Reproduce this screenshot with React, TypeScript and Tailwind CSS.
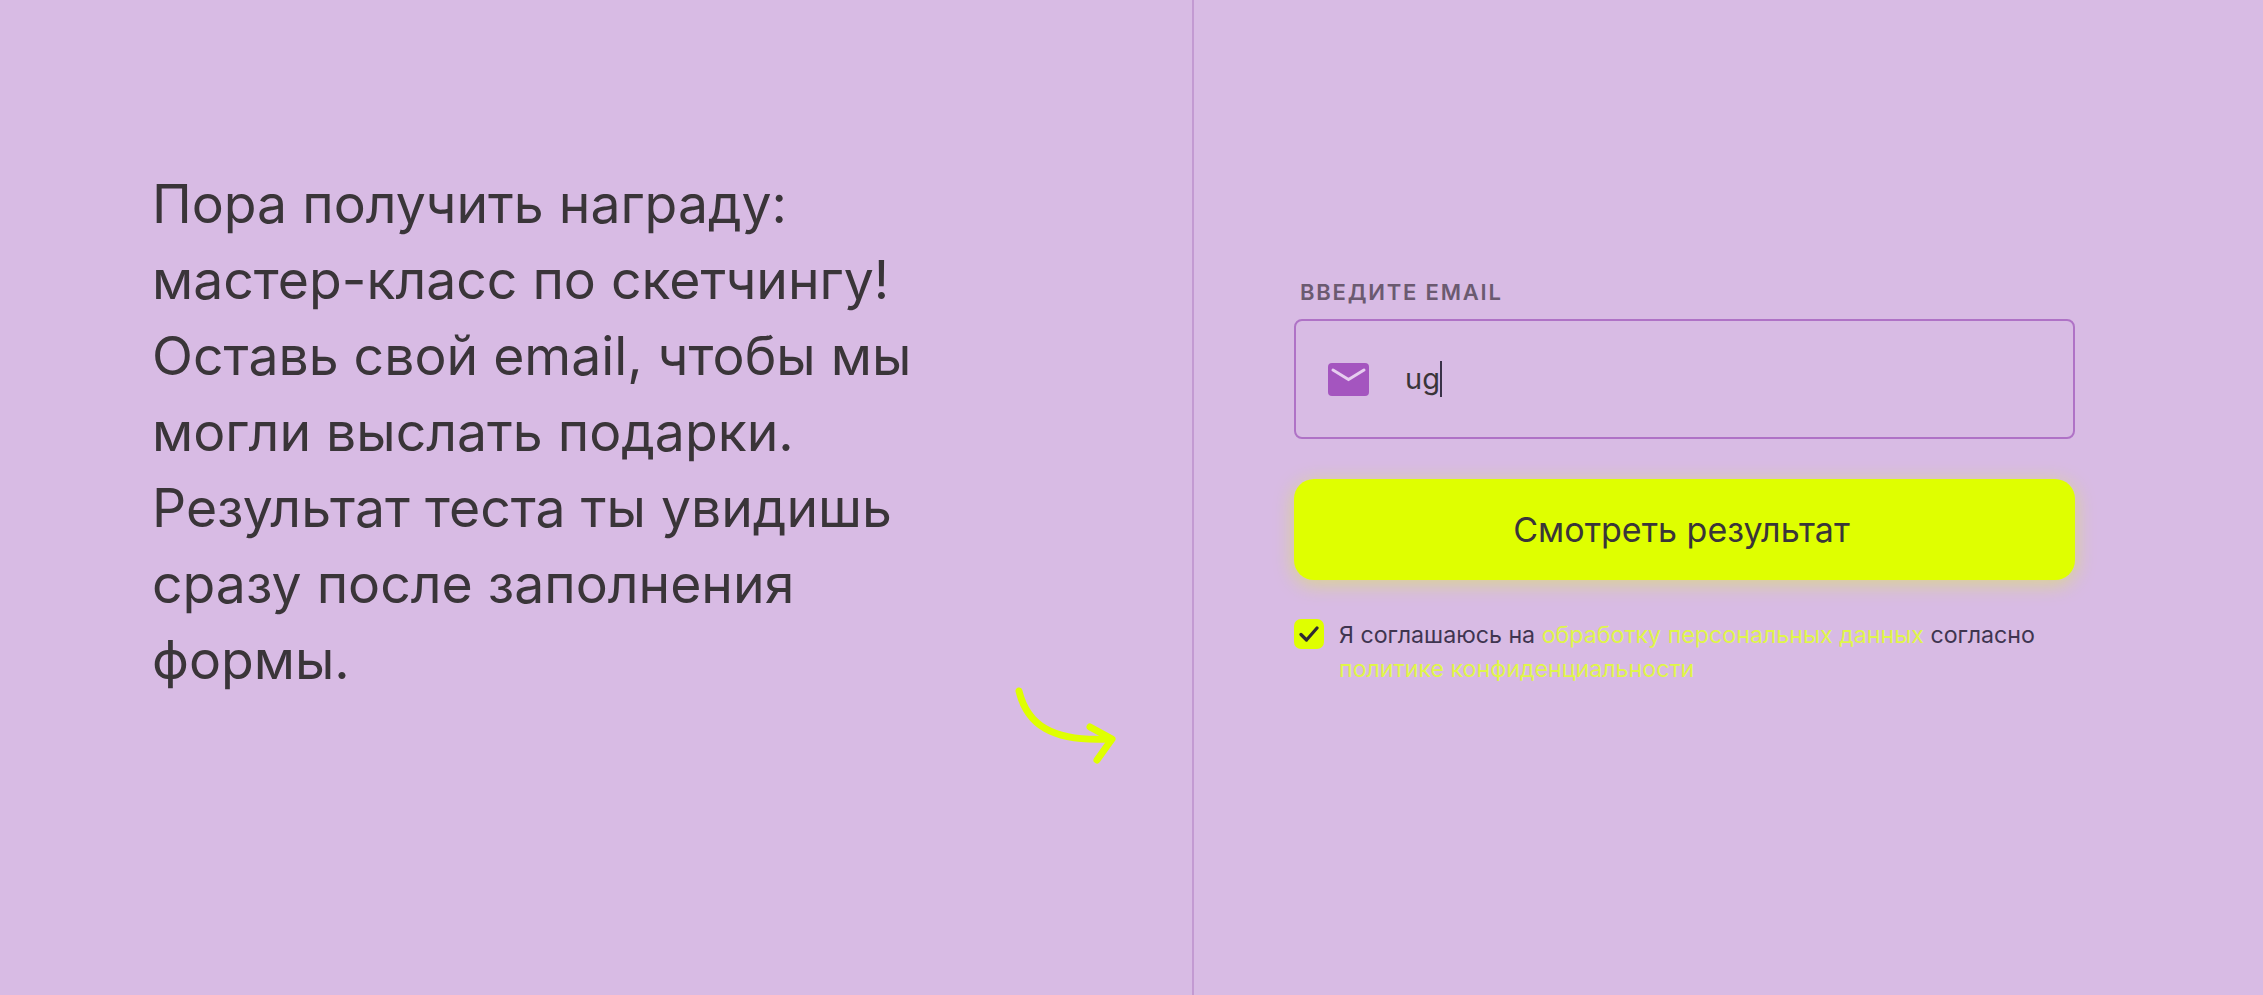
const lines = [
  "Пора получить награду:",
  "мастер-класс по скетчингу!",
  "Оставь свой email, чтобы мы",
  "могли выслать подарки.",
  "Результат теста ты увидишь",
  "сразу после заполнения",
  "формы.",
];

const App = () => {
  return (
    <div className="flex h-[995px] overflow-hidden bg-[#d8bbe4] font-['Inter',sans-serif] text-[#3a3539]">
      <div className="relative w-[1194px] shrink-0 border-r-2 border-[#c39ad2] pl-[152px] pt-[166px]">
        <div className="text-[53.5px] leading-[76px]">
          {lines.map((line, i) => (
            <div key={i} className="whitespace-nowrap">{line}</div>
          ))}
        </div>
        <svg className="absolute left-[1013px] top-[686px]" width="108" height="86" viewBox="0 0 108 86" fill="none">
          <path d="M6 5C14 38 38 56 96 53" stroke="#dfff00" strokeWidth="7" strokeLinecap="round" />
          <path d="M77 41L99 53L84 74" stroke="#dfff00" strokeWidth="7" strokeLinecap="round" strokeLinejoin="round" />
        </svg>
      </div>

      <div className="w-[781px] ml-[100px] pt-[280px]">
        <div className="ml-[6px] h-[24px] text-[22px] leading-[24px] font-semibold tracking-[1.8px] text-[#6b5a70]">ВВЕДИТЕ EMAIL</div>
        <div className="mt-[15px] flex h-[120px] items-center rounded-[8px] border-2 border-[#af72c6] pl-[32px]">
          <svg width="41" height="33" viewBox="0 0 41 33">
            <rect width="41" height="33" rx="4" fill="#a455bf" />
            <path d="M5 7L20.5 16.5L36 7" stroke="#e6cdef" strokeWidth="3" fill="none" strokeLinecap="round" />
          </svg>
          <span className="ml-[36px] text-[29px] leading-[34px]">ug</span>
          <span className="h-[36px] w-[2px] bg-[#3a3248]" />
        </div>
        <button className="mt-[40px] flex h-[101px] w-full items-center justify-center rounded-[20px] bg-[#dfff00] pr-[6px] text-[34px] text-[#3a3539] shadow-[0_4px_20px_rgba(223,255,0,0.4)]">
          Смотреть результат
        </button>
        <div className="mt-[39px] flex">
          <div className="flex h-[30px] w-[30px] shrink-0 items-center justify-center rounded-[7px] bg-[#dfff00]">
            <svg width="20" height="16" viewBox="0 0 20 16" fill="none">
              <path d="M2 8.5L7.5 14L18 2" stroke="#2f2a33" strokeWidth="3.2" strokeLinecap="round" strokeLinejoin="round" />
            </svg>
          </div>
          <p className="ml-[15px] -mt-[1px] text-[23.2px] leading-[34px] text-[#3f3550]">
            Я соглашаюсь на <span className="text-[#e0f64a]">обработку персональных данных</span> согласно
            <br />
            <span className="text-[#e0f64a]">политике конфиденциальности</span>
          </p>
        </div>
      </div>
    </div>
  );
};

export default App;
